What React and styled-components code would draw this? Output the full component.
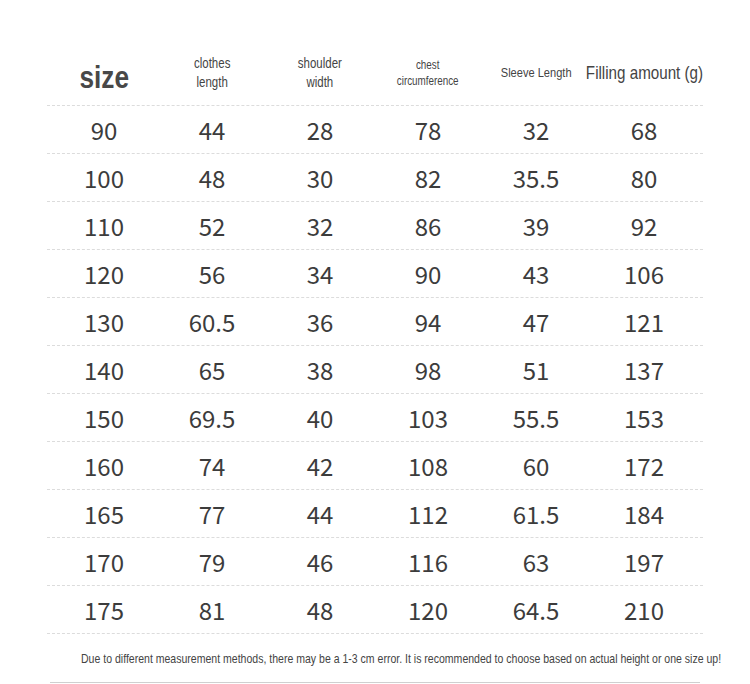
import React from "react";
import styled, { createGlobalStyle } from "styled-components";

const Global = createGlobalStyle`
  html, body { margin: 0; padding: 0; background: #ffffff; }
  body { width: 750px; height: 684px; overflow: hidden; }
`;

const Page = styled.div`
  padding: 40px 0 0 47px;
  width: 656px;
`;

const Row = styled.div`
  display: grid;
  grid-template-columns: repeat(6, 108px);
  padding-left: 3px;
  height: ${(p) => p.$h}px;
  align-items: center;
  border-bottom: 1px dashed #dcdcdc;
  box-sizing: border-box;
`;

const HeadCell = styled.div`
  display: flex;
  justify-content: center;
  padding-top: ${(p) => p.$pt || 0}px;
`;

const Narrow = styled.span`
  display: inline-block;
  font-family: "Liberation Sans", Arial, sans-serif;
  font-size: ${(p) => p.$size}px;
  line-height: ${(p) => p.$lh}px;
  font-weight: ${(p) => (p.$bold ? 700 : 400)};
  color: ${(p) => (p.$bold ? "#484848" : "#444")};
  text-align: center;
  white-space: nowrap;
  transform: scaleX(0.82);
  transform-origin: center;
`;

const Cell = styled.div`
  font-family: "Noto Sans CJK SC", "Noto Sans", sans-serif;
  font-size: 24px;
  color: #3c3c3c;
  text-align: center;
  line-height: 48px;
`;

const Footer = styled.div`
  height: 48px;
  display: flex;
  align-items: center;
  margin: 0 3px;
  padding-left: 31px;
  border-bottom: 1px solid #d0d0d0;
  overflow: visible;
`;

const FootText = styled.span`
  display: inline-block;
  font-family: "Liberation Sans", Arial, sans-serif;
  font-size: 13px;
  color: #444;
  white-space: nowrap;
  transform: scaleX(0.81);
  transform-origin: left center;
`;

const data = [
  ["90", "44", "28", "78", "32", "68"],
  ["100", "48", "30", "82", "35.5", "80"],
  ["110", "52", "32", "86", "39", "92"],
  ["120", "56", "34", "90", "43", "106"],
  ["130", "60.5", "36", "94", "47", "121"],
  ["140", "65", "38", "98", "51", "137"],
  ["150", "69.5", "40", "103", "55.5", "153"],
  ["160", "74", "42", "108", "60", "172"],
  ["165", "77", "44", "112", "61.5", "184"],
  ["170", "79", "46", "116", "63", "197"],
  ["175", "81", "48", "120", "64.5", "210"],
];

export default function App() {
  return (
    <>
      <Global />
      <Page>
        <Row $h={66}>
          <HeadCell $pt={8}><Narrow $size={32} $lh={36} $bold>size</Narrow></HeadCell>
          <HeadCell><Narrow $size={14} $lh={19}>clothes<br />length</Narrow></HeadCell>
          <HeadCell><Narrow $size={14} $lh={19}>shoulder<br />width</Narrow></HeadCell>
          <HeadCell><Narrow $size={12} $lh={16}>chest<br />circumference</Narrow></HeadCell>
          <HeadCell><Narrow $size={13.5} $lh={18}>Sleeve Length</Narrow></HeadCell>
          <HeadCell><Narrow $size={18.5} $lh={22}>Filling amount (g)</Narrow></HeadCell>
        </Row>
        {data.map((r, i) => (
          <Row key={i} $h={48}>
            {r.map((v, j) => (
              <Cell key={j}>{v}</Cell>
            ))}
          </Row>
        ))}
        <Footer>
          <FootText>
            Due to different measurement methods, there may be a 1-3 cm error. It is recommended to choose based on actual height or one size up!
          </FootText>
        </Footer>
      </Page>
    </>
  );
}
